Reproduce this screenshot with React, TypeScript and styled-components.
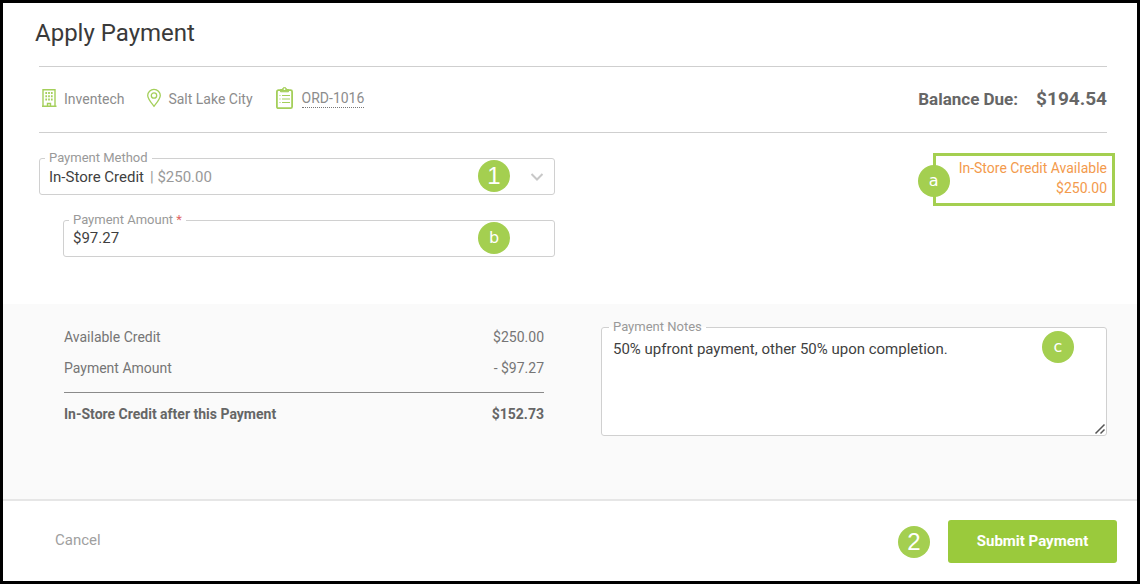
import React from "react";
import styled, { createGlobalStyle } from "styled-components";

const GlobalStyle = createGlobalStyle`
  *, *::before, *::after { box-sizing: border-box; }
  html { height: 100%; }
  body {
    margin: 0;
    min-height: 100%;
    background: #fff;
    color: #3f3f3f;
    font-family: Roboto, "Liberation Sans", sans-serif;
    font-size: 14px;
    line-height: 20px;
  }
`;

const Dialog = styled.main`
  display: flex;
  flex-direction: column;
  min-height: 100vh;
  border: 3px solid #000;
  background: #fff;
`;

const Header = styled.header`
  padding: 14px 30px 0 36px;
`;

const Title = styled.h1`
  margin: 0 0 0 -4px;
  padding-bottom: 17px;
  font-size: 24px;
  font-weight: 400;
  line-height: 32px;
  color: #3a3a3a;
`;

const InfoBar = styled.div`
  display: flex;
  align-items: center;
  justify-content: space-between;
  height: 67px;
  padding-bottom: 2px;
  border-top: 1px solid #cfcfcf;
  border-bottom: 1px solid #cfcfcf;
`;

const InfoList = styled.div`
  display: flex;
  align-items: center;
  gap: 22px;
  padding-left: 1px;
  color: #8c8c8c;
`;

const InfoItem = styled.div`
  display: flex;
  align-items: center;
  gap: 6px;
`;

const OrderLink = styled.a`
  margin-left: 2px;
  color: inherit;
  line-height: 18px;
  text-decoration: none;
  border-bottom: 1px dotted #777;
`;

const Icon = styled.svg`
  display: block;
  flex: none;
  margin-bottom: 2px;
  fill: none;
  stroke: #a4cf5a;
`;

const Balance = styled.div`
  display: flex;
  align-items: center;
  gap: 18px;
  font-size: 17px;
  font-weight: 700;
  color: #666;
`;

const BalanceAmount = styled.span`
  font-size: 19px;
`;

const Columns = styled.div`
  display: grid;
  grid-template-columns: 516fr 506fr;
  column-gap: 46px;
  padding: 0 30px 0 36px;
`;

const FormArea = styled(Columns)`
  padding-top: 17px;
  padding-bottom: 47px;
`;

const Fields = styled.div`
  display: flex;
  flex-direction: column;
  gap: 17px;
`;

const Outline = styled.fieldset<{ $indent?: boolean }>`
  position: relative;
  min-width: 0;
  margin: 0 0 0 ${(p) => (p.$indent ? 24 : 0)}px;
  padding: 0 0 0 5px;
  border: 1px solid #d0d0d0;
  border-radius: 3px;
`;

const Legend = styled.legend`
  padding: 0 4px;
  font-size: 13px;
  line-height: 16px;
  color: #999;
`;

const Required = styled.span`
  color: #e06666;
`;

const Control = styled.div`
  position: relative;
  display: flex;
`;

const Select = styled.select`
  width: 100%;
  height: 28px;
  padding: 0 4px 6px;
  border: 0;
  outline: 0;
  appearance: none;
  background: transparent;
  color: #3f3f3f;
  font: inherit;
  font-size: 15px;
`;

const SelectHint = styled.span`
  position: absolute;
  left: 105px;
  top: 0;
  font-size: 15px;
  line-height: 22px;
  color: #999;
  pointer-events: none;
`;

const Chevron = styled.svg`
  position: absolute;
  right: 10px;
  top: 6px;
  fill: none;
  stroke: #c8c8c8;
  stroke-width: 2;
  pointer-events: none;
`;

const Input = styled.input`
  width: 100%;
  height: 28px;
  padding: 0 4px 8px;
  border: 0;
  outline: 0;
  background: transparent;
  color: #3f3f3f;
  font: inherit;
  font-size: 15px;
`;

const Badge = styled.span<{ $kind?: "letter" | "number" }>`
  display: flex;
  flex: none;
  align-items: center;
  justify-content: center;
  width: 32px;
  height: 32px;
  border-radius: 50%;
  background: #a4cf50;
  color: #fff;
  font-family: ${(p) =>
    p.$kind === "number" ? '"Liberation Sans", sans-serif' : '"DejaVu Sans", sans-serif'};
  font-size: ${(p) => (p.$kind === "number" ? 24 : 16)}px;
  line-height: 32px;
`;

const FieldBadge = styled(Badge)`
  position: absolute;
  right: 44px;
  top: -6px;
`;

const NotesBadge = styled(Badge)`
  position: absolute;
  right: 32px;
  top: -4px;
`;

const CreditBadge = styled(Badge)`
  position: absolute;
  left: -18px;
  top: 9px;
`;

const CreditBox = styled.div`
  position: relative;
  justify-self: end;
  align-self: start;
  margin: 3px -8px 0 0;
  padding: 2px 5px 5px 23px;
  border: 3px solid #a4cf50;
  color: #f39a4c;
  text-align: right;
`;

const SummaryArea = styled(Columns)`
  flex: 1;
  align-items: start;
  padding-top: 15px;
  padding-bottom: 63px;
  background: #fafafa;
`;

const SummaryWrap = styled.div`
  padding: 2px 11px 0 25px;
`;

const Summary = styled.table`
  width: 100%;
  border-collapse: collapse;
  color: #757575;

  th, td {
    height: 32px;
    padding: 0;
    font-weight: 400;
    text-align: left;
  }
  td { text-align: right; }
  tfoot th, tfoot td {
    height: 44px;
    border-top: 1px solid #8a8a8a;
    font-weight: 700;
    color: #666;
  }
  tbody tr:last-child th, tbody tr:last-child td {
    height: 39px;
    padding-bottom: 8px;
  }
`;

const NotesOutline = styled(Outline)`
  padding-left: 7px;
  background: #fff;
`;

const Notes = styled.textarea`
  display: block;
  width: 100%;
  height: 100px;
  padding: 4px;
  border: 0;
  outline: 0;
  resize: none;
  background: transparent;
  color: #3f3f3f;
  font: inherit;
  font-size: 15px;
`;

const Grip = styled.svg`
  position: absolute;
  right: 0;
  bottom: 0;
  fill: none;
  stroke: #555;
  stroke-width: 1.5;
  pointer-events: none;
`;

const Footer = styled.footer`
  display: flex;
  align-items: center;
  justify-content: space-between;
  padding: 19px 20px 18px 52px;
  border-top: 2px solid #e6e6e6;
`;

const CancelButton = styled.button`
  padding: 0 0 3px;
  border: 0;
  background: none;
  color: #a0a0a0;
  font: inherit;
  font-size: 15px;
  cursor: pointer;
`;

const Actions = styled.div`
  display: flex;
  align-items: center;
  gap: 18px;
`;

const SubmitButton = styled.button`
  min-width: 169px;
  height: 43px;
  padding: 0 26px 1px;
  border: 0;
  border-radius: 3px;
  background: #9aca3c;
  color: #fff;
  font: inherit;
  font-size: 15px;
  font-weight: 700;
  cursor: pointer;
`;

const BuildingIcon = () => (
  <Icon width="18" height="20" viewBox="0 0 18 20" aria-hidden="true">
    <path d="M3 18.3V1.700H15V18.300M2 18.300H16.500M7.500 18.300V15.500H10.500V18.300" strokeWidth="1.400" />
    <path d="M6.200 4V14M9 4V14M11.800 4V14" strokeWidth="1.700" strokeDasharray="2 1.300" />
  </Icon>
);

const PinIcon = () => (
  <Icon width="16" height="20" viewBox="0 0 16 20" aria-hidden="true">
    <path
      d="M8 18.300C5 14.500 1.700 10.700 1.700 7.500A6.300 6.100 0 0 1 14.300 7.500C14.300 10.700 11 14.500 8 18.300Z"
      strokeWidth="1.300"
    />
    <circle cx="8" cy="7.500" r="2.700" strokeWidth="1.300" />
  </Icon>
);

const ClipboardIcon = () => (
  <Icon width="19" height="24" viewBox="0 0 19 24" aria-hidden="true">
    <rect x="1.900" y="4.200" width="15.200" height="18" rx="1.500" strokeWidth="1.800" />
    <path d="M5.500 5.800V3.500H7.500A2 2 0 0 1 11.500 3.500H13.500V5.800Z" fill="#a4cf5a" strokeWidth="1" />
    <circle cx="9.500" cy="3.200" r="0.900" fill="#fff" stroke="none" />
    <path d="M4.500 9.500H5.500M7 9.500H15M4.500 13H5.500M7 13H15M4.500 16.500H5.500M7 16.500H15" strokeWidth="1.200" />
  </Icon>
);

export default function App() {
  return (
    <>
      <GlobalStyle />
      <Dialog>
        <Header>
          <Title>Apply Payment</Title>
          <InfoBar>
            <InfoList>
              <InfoItem>
                <BuildingIcon />
                Inventech
              </InfoItem>
              <InfoItem>
                <PinIcon />
                Salt Lake City
              </InfoItem>
              <InfoItem>
                <ClipboardIcon />
                <OrderLink href="#order">ORD-1016</OrderLink>
              </InfoItem>
            </InfoList>
            <Balance>
              <span>Balance Due:</span>
              <BalanceAmount>$194.54</BalanceAmount>
            </Balance>
          </InfoBar>
        </Header>

        <FormArea>
          <Fields>
            <Outline>
              <Legend>
                <label htmlFor="method">Payment Method</label>
              </Legend>
              <Control>
                <Select id="method" defaultValue="credit">
                  <option value="credit">In-Store Credit</option>
                </Select>
                <SelectHint>| $250.00</SelectHint>
                <Chevron width="14" height="10" viewBox="0 0 14 10" aria-hidden="true">
                  <path d="M1.500 2L7 7.500L12.500 2" />
                </Chevron>
              </Control>
              <FieldBadge $kind="number">1</FieldBadge>
            </Outline>
            <Outline $indent>
              <Legend>
                <label htmlFor="amount">
                  Payment Amount <Required>*</Required>
                </label>
              </Legend>
              <Control>
                <Input id="amount" type="text" defaultValue="$97.27" required />
              </Control>
              <FieldBadge>b</FieldBadge>
            </Outline>
          </Fields>
          <CreditBox>
            <div>In-Store Credit Available</div>
            <div>$250.00</div>
            <CreditBadge>a</CreditBadge>
          </CreditBox>
        </FormArea>

        <SummaryArea>
          <SummaryWrap>
            <Summary>
              <tbody>
                <tr>
                  <th scope="row">Available Credit</th>
                  <td>$250.00</td>
                </tr>
                <tr>
                  <th scope="row">Payment Amount</th>
                  <td>- $97.27</td>
                </tr>
              </tbody>
              <tfoot>
                <tr>
                  <th scope="row">In-Store Credit after this Payment</th>
                  <td>$152.73</td>
                </tr>
              </tfoot>
            </Summary>
          </SummaryWrap>
          <NotesOutline>
            <Legend>
              <label htmlFor="notes">Payment Notes</label>
            </Legend>
            <Notes
              id="notes"
              defaultValue="50% upfront payment, other 50% upon completion."
            />
            <Grip width="12" height="12" viewBox="0 0 12 12" aria-hidden="true">
              <path d="M1.500 10.500L10.500 1.500M6.500 10.500L10.500 6.500" />
            </Grip>
            <NotesBadge>c</NotesBadge>
          </NotesOutline>
        </SummaryArea>

        <Footer>
          <CancelButton type="button">Cancel</CancelButton>
          <Actions>
            <Badge $kind="number">2</Badge>
            <SubmitButton type="submit">Submit Payment</SubmitButton>
          </Actions>
        </Footer>
      </Dialog>
    </>
  );
}
